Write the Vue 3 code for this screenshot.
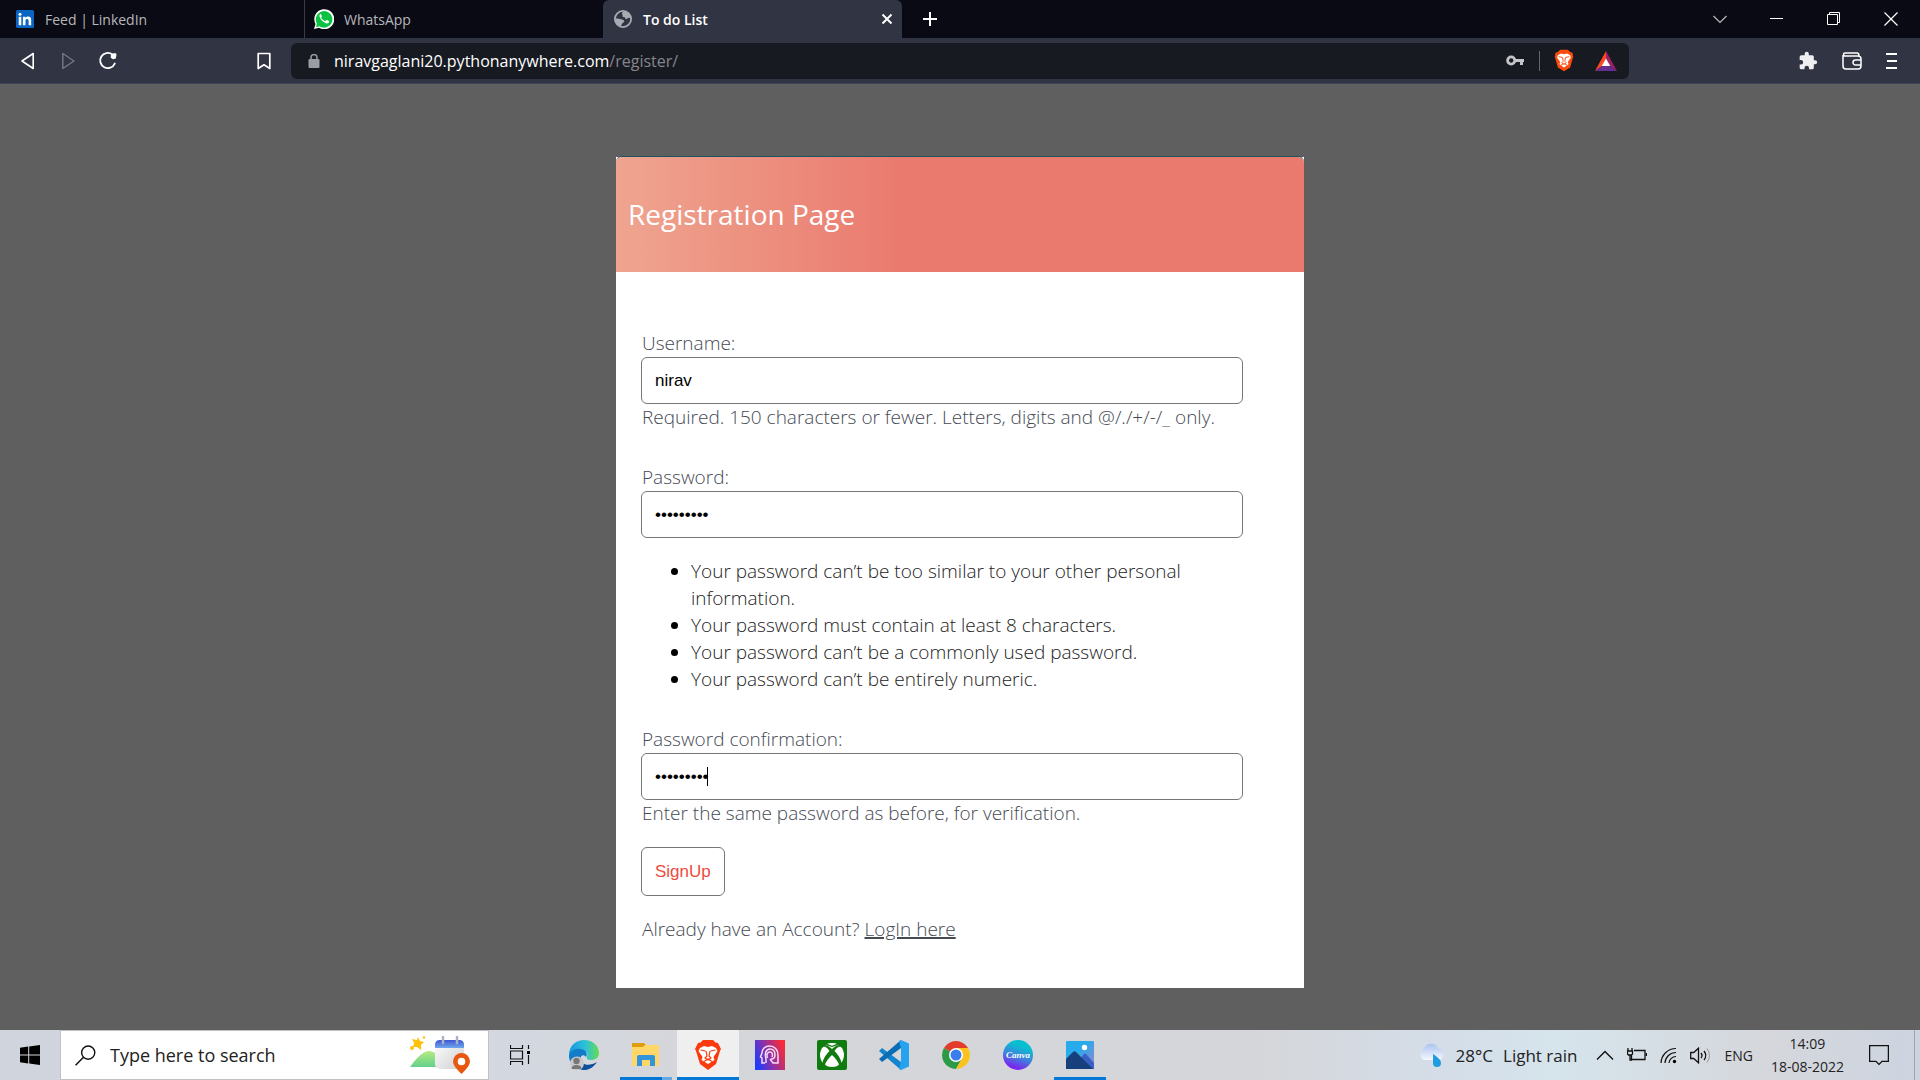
<script setup>
import { ref } from 'vue'

const username = ref('nirav')
const password = ref('nirav1234')
const confirmation = ref('nirav1234')
const search = ref('')
const rules = [
  'Your password can’t be too similar to your other personal information.',
  'Your password must contain at least 8 characters.',
  'Your password can’t be a commonly used password.',
  'Your password can’t be entirely numeric.',
]
</script>

<template>
  <div class="desktop">
    <header class="browser">
      <div class="tabs">
        <div class="tab first">
          <svg class="fav" viewBox="0 0 18 18"><rect width="18" height="18" rx="1.5" fill="#0a66c2" /><path d="M2.7 6.8h2.6v8.4H2.7zM6.9 6.8h2.5V8c.5-.8 1.4-1.4 2.6-1.4 2.6 0 3.2 1.6 3.2 4v4.6h-2.6v-4.1c0-1.2-.2-2.2-1.5-2.2s-1.600.9-1.600 2.100v4.200H6.900z" fill="#fff" /><circle cx="4" cy="4.200" r="1.500" fill="#fff" /></svg>
          <span>Feed | LinkedIn</span>
        </div>
        <div class="tab second">
          <svg class="fav-lg" viewBox="0 0 20 20"><path d="M0 20l1.500-5A10 10 0 1 1 5 18.700z" fill="#fff" /><path d="M1.900 18.200l1-3.700A8.300 8.300 0 1 1 5.400 17.200z" fill="#0dc143" /><path d="M6.400 5c-.8.500-1.200 1.500-.9 2.600.9 3.300 3.700 6 7 6.800 1.200.2 2.300-.5 2.600-1.600.1-.5 0-.7-.4-.9l-1.800-.9c-.3-.1-.5 0-.7.2l-.8 1c-2-.8-3.400-2-4.300-3.800l.7-.9c.1-.2.1-.4 0-.6l-.8-1.700c-.1-.3-.3-.3-.6-.2z" fill="#fff" /></svg>
          <span>WhatsApp</span>
        </div>
        <div class="tab active">
          <svg class="fav" viewBox="0 0 18 18"><circle cx="9" cy="9" r="8.100" fill="none" stroke="#a9abb3" stroke-width="1.800" /><path d="M10 1.200C8 2.500 7.200 3.400 8.300 4.200c1 .8-.4 1.400.3 2.200.9 1 2.200.2 2.500 1.500.3 1.400 2 1.200 2.800.4.700-.7 1.600-.5 2.700 0C16.600 4.500 13.500 1.500 10 1.200zM1.200 8.700C3 8.400 5.400 8.600 7 9.300c1.400.6 3.500.6 3.300 2.100-.1 1.200-1.900 1-2 2.200-.1 1.300-1.300 1.400-1.700 2.700C3.300 15.200 1.300 12.300 1.200 8.700z" fill="#a9abb3" /></svg>
          <span>To do List</span>
          <button class="plain close-tab" aria-label="Close tab"><svg width="12" height="12" viewBox="0 0 12 12"><path d="M1.500 1.500l9 9m0-9l-9 9" stroke="#fff" stroke-width="2" /></svg></button>
        </div>
        <button class="plain new-tab" aria-label="New tab"><svg width="16" height="16" viewBox="0 0 16 16"><path d="M8 1v14M1 8h14" stroke="#fff" stroke-width="2" /></svg></button>
        <div class="window-buttons">
          <button class="plain" aria-label="Search tabs"><svg width="14" height="14" viewBox="0 0 14 14"><path d="M.5 4l6.500 6.500L13.500 4" fill="none" stroke="#bbb" stroke-width="1.200" /></svg></button>
          <button class="plain" aria-label="Minimise"><svg width="14" height="14" viewBox="0 0 14 14"><path d="M0 6.500h13" stroke="#fff" /></svg></button>
          <button class="plain" aria-label="Restore"><svg width="14" height="14" viewBox="0 0 14 14"><path d="M.5 2.500h10v10H.5zM2.500 2V.5h10v10H11" fill="none" stroke="#fff" /></svg></button>
          <button class="plain" aria-label="Close"><svg width="14" height="14" viewBox="0 0 14 14"><path d="M.5.500l13 13m0-13l-13 13" stroke="#fff" stroke-width="1.200" /></svg></button>
        </div>
      </div>

      <nav class="toolbar">
        <div class="nav-buttons">
          <button class="plain" aria-label="Back"><svg width="20" height="20" viewBox="0 0 20 20"><path d="M15.200 2.500v15L4 10z" fill="none" stroke="#fff" stroke-width="1.600" stroke-linejoin="round" /></svg></button>
          <button class="plain" aria-label="Forward"><svg width="20" height="20" viewBox="0 0 20 20"><path d="M4.800 2.500v15L16 10z" fill="none" stroke="#74757f" stroke-width="1.500" stroke-linejoin="round" /></svg></button>
          <button class="plain" aria-label="Reload"><svg width="20" height="20" viewBox="0 0 20 20"><path d="M14.300 3.400A7.600 7.600 0 1 0 16.800 12.500" fill="none" stroke="#fff" stroke-width="1.900" stroke-linecap="round" /><path d="M13 3l4-1 1.500 1-.6 4.500-2.900.8-2.300-1.600z" fill="#fff" /></svg></button>
          <button class="plain bookmark" aria-label="Bookmark"><svg width="20" height="20" viewBox="0 0 20 20"><path d="M4.200 2.500h11.600v15L10 13.800l-5.800 3.700z" fill="none" stroke="#fff" stroke-width="1.700" stroke-linejoin="round" /></svg></button>
        </div>
        <div class="address">
          <svg width="12" height="14" viewBox="0 0 12 14"><rect x=".5" y="5" width="11" height="9" rx="1" fill="#9b9ca5" /><path d="M3 5.500V3.500a3 3 0 0 1 6 0v2" fill="none" stroke="#9b9ca5" stroke-width="1.500" /></svg>
          <span class="url">niravgaglani20.pythonanywhere.com<i>/register/</i></span>
          <button class="plain" aria-label="Passwords"><svg width="18" height="11" viewBox="0 0 18 11"><circle cx="5.200" cy="5.500" r="3.600" fill="none" stroke="#c4c5c9" stroke-width="2.800" /><path d="M8 4h10v3h-1v3h-3V7H8z" fill="#c4c5c9" /></svg></button>
          <span class="divider"></span>
          <button class="plain" aria-label="Brave Shields"><svg width="20" height="23" viewBox="0 0 26 30"><path d="M8 1h10l3 3 3 1 1 5-4 14-8 5-8-5L1 10l1-5 3-1z" fill="#fb4b0e" /><path d="M5 8l4-2 4 1 4-1 4 2 1 3-4 6 1 3-6 4-6-4 1-3-4-6z" fill="#fff" /><path d="M6 10l5 1M20 10l-5 1M11 11l1 5-2 2 3 2 3-2-2-2 1-5M9 21l4-2 4 2" fill="none" stroke="#fb4b0e" stroke-width="1.200" /></svg></button>
          <button class="plain" aria-label="Rewards"><svg width="22" height="20" viewBox="0 0 22 20"><path d="M11 0L0 20l7-5 4-7z" fill="#ff4724" /><path d="M11 0l11 20-7-5-4-7z" fill="#9e1f63" /><path d="M0 20h22l-7-5H7z" fill="#662d91" /><path d="M11 7.500L15.300 15H6.700z" fill="#fff" /></svg></button>
        </div>
        <div class="extensions">
          <button class="plain" aria-label="Extensions"><svg width="20" height="20" viewBox="0 0 24 24"><path d="M20.500 11H19V7a2 2 0 0 0-2-2h-4V3.500a2.500 2.500 0 0 0-5 0V5H4a2 2 0 0 0-2 2v3.800h1.500a2.700 2.700 0 0 1 0 5.400H2V20a2 2 0 0 0 2 2h3.800v-1.500a2.700 2.700 0 0 1 5.400 0V22H17a2 2 0 0 0 2-2v-4h1.500a2.500 2.500 0 0 0 0-5z" fill="#efeff2" /></svg></button>
          <button class="plain" aria-label="Wallet"><svg width="20" height="18" viewBox="0 0 20 18"><g fill="none" stroke="#fff" stroke-width="1.500"><path d="M1 3v11a3 3 0 0 0 3 3h12a3 3 0 0 0 3-3V7a3 3 0 0 0-3-3H3a1.500 1.500 0 0 1 0-3h12q2 0 2 3M19 8h-5.500a2.500 2.500 0 0 0 0 5H19" /></g></svg></button>
          <button class="plain" aria-label="Menu"><svg width="12" height="18" viewBox="0 0 12 18"><path d="M0 2h11M1 9h10M0 16h11" stroke="#fff" stroke-width="1.800" /></svg></button>
        </div>
      </nav>
    </header>

    <main class="page">
      <section class="card">
        <div class="card-head"><h1>Registration Page</h1></div>
        <form class="card-body" @submit.prevent>
          <div class="field">
            <label for="username">Username:</label>
            <input id="username" v-model="username" type="text">
            <p>Required. 150 characters or fewer. Letters, digits and @/./+/-/_ only.</p>
          </div>
          <div class="field">
            <label for="password">Password:</label>
            <input id="password" v-model="password" type="password">
            <ul>
              <li v-for="rule in rules" :key="rule">{{ rule }}</li>
            </ul>
          </div>
          <div class="field">
            <label for="confirmation">Password confirmation:</label>
            <div class="caret-box">
              <input id="confirmation" v-model="confirmation" type="password">
              <span class="caret"></span>
            </div>
            <p>Enter the same password as before, for verification.</p>
          </div>
          <button class="signup" type="submit">SignUp</button>
          <p class="login">Already have an Account? <a href="#login">LogIn here</a></p>
        </form>
      </section>
    </main>

    <footer class="taskbar">
      <button class="plain start" aria-label="Start"><svg width="20" height="20" viewBox="0 0 20 20"><path d="M0 2.700L8.200 1.600v7.900H0zM9.200 1.400L20 0v9.500H9.200zM0 10.500h8.200v7.900L0 17.300zM9.200 10.500H20V20L9.200 18.600z" /></svg></button>
      <label class="search" for="search">
        <svg width="21" height="21" viewBox="0 0 21 21"><circle cx="13.200" cy="7.600" r="6.600" fill="none" stroke="#111" stroke-width="1.400" /><path d="M8.500 12.300L.6 20.300" stroke="#111" stroke-width="1.500" /></svg>
        <input id="search" v-model="search" type="text" placeholder="Type here to search">
        <svg width="60" height="38" viewBox="0 0 60 38">
          <defs>
            <linearGradient id="hill" x2="0" y2="1"><stop stop-color="#b5eb83" /><stop offset="1" stop-color="#65d08b" /></linearGradient>
            <linearGradient id="cal" x2="0" y2="1"><stop stop-color="#3c57d2" /><stop offset="1" stop-color="#72a7ee" /></linearGradient>
            <linearGradient id="sheet" x2="1" y2="1"><stop stop-color="#fff" /><stop offset="1" stop-color="#cfcfcf" /></linearGradient>
          </defs>
          <path d="M8 1l2 4 4 1-3 3 0 5-4-3-4 0 1-4-2-4 5 1z" fill="#ffc20a" /><circle cx="2" cy="12" r="2" fill="#ffc20a" /><circle cx="14" cy="1.500" r="1.200" fill="#ffc20a" />
          <path d="M0 31q14-20 23-15 8 2 14 15z" fill="url(#hill)" />
          <rect x="25" y="4" width="29" height="29" rx="5" fill="url(#sheet)" /><path d="M25 12V9q0-5 5-5h19q5 0 5 5v3z" fill="url(#cal)" />
          <path d="M33 1v6M47 1v6" stroke="#aab2c6" stroke-width="2.500" stroke-linecap="round" />
          <path d="M51.500 38Q43 30 43 25.500a8.500 8.500 0 0 1 17 0Q60 30 51.500 38z" fill="#e85610" /><circle cx="51.500" cy="25.500" r="3.800" fill="#fff" />
        </svg>
      </label>
      <div class="apps">
        <button class="plain app" aria-label="Task view"><svg width="20" height="20" viewBox="0 0 20 20"><path d="M.5 0v3.500h12V0M.500 20v-3.500h12V20M.500 6h12v8H.500z" fill="none" stroke="#111" stroke-width="1.200" /><path d="M18.500 0v4M18.500 10v9" stroke="#111" stroke-width="1.200" /><rect x="17" y="6" width="3" height="3" /></svg></button>
        <button class="plain app" aria-label="Edge">
          <svg width="30" height="30" viewBox="0 0 30 30">
            <defs><linearGradient id="edge"><stop stop-color="#1597df" /><stop offset=".55" stop-color="#2ec2d8" /><stop offset="1" stop-color="#64dc50" /></linearGradient></defs>
            <path d="M0 15C0 5 8 0 15 0c9 0 15 6 15 13 0 5-4 7-8 7-3 0-5-1-4-3 2-4-2-7-6-7C5 10 1 13 0 19z" fill="url(#edge)" />
            <path d="M0 16c1-5 6-8 11-7 6 0 8 5 6 8-3-4-7 0-5 5 1 4 4 7 7 8C8 32 0 24 0 16z" fill="#127cc9" />
            <path d="M12 18c-1 7 8 9 16 4-3 5-8 8-13 8-5-1-7-7-3-12z" fill="#0d4f9c" />
            <circle cx="8" cy="23.500" r="7" fill="#c9c9c9" /><circle cx="7.500" cy="21" r="3.200" fill="#777" /><path d="M2.500 29q0-4 5-4t5 4z" fill="#777" />
          </svg>
        </button>
        <button class="plain app running stacked" aria-label="File Explorer"><svg width="28" height="24" viewBox="0 0 28 24"><path d="M0 1q0-1 1-1h11l2 2-2 4H0z" fill="#df9d0c" /><path d="M0 4h11l2-2h14v21H0z" fill="#ffd668" /><path d="M5 23V14q0-2 2-2h14q2 0 2 2v9h-5v-6h-8v6z" fill="#3294db" /></svg></button>
        <button class="plain app running current" aria-label="Brave"><svg width="26" height="30" viewBox="0 0 26 30"><path d="M8 0h10l2.500 2.500L23 3l3 6-1 2-4 13-8 6-8-6L1 11 0 9l3-6 2.500-.5z" fill="#fb3b0e" /><path d="M5 8l4-2 4 1 4-1 4 2 1.500 3-4 6 1 3-6.500 4-6.500-4 1-3-4-6z" fill="#fff" /><path d="M5.500 10l5 1M20.500 10l-5 1M11 11l1 5-2 2 3 2 3-2-2-2 1-5M9 21.500l4-2.500 4 2.500" fill="none" stroke="#fb3b0e" stroke-width="1.200" /></svg></button>
        <button class="plain app" aria-label="Assistant"><svg width="30" height="30" viewBox="0 0 30 30"><defs><linearGradient id="head" x1="0" x2="1" y1=".7" y2=".3"><stop stop-color="#1f3bff" /><stop offset=".5" stop-color="#96309e" /><stop offset="1" stop-color="#fb2936" /></linearGradient></defs><rect width="30" height="30" fill="url(#head)" /><g fill="none" stroke="#f3dcf8" stroke-width="1.500"><path d="M10 23H7v-5l-1.500-1L7 13C7 9 10 6 14.500 6c5 0 8.500 3.500 8.500 9v8h-5l-3-4" /><path d="M11 23v-4c-2-5 0-10 4-10 3.500 0 5 3 5 6s-2 4-4 4M12.500 18c-1.500-3 0-6 2.500-6s3 3 2 5" /></g></svg></button>
        <button class="plain app" aria-label="Xbox"><svg width="30" height="30" viewBox="0 0 30 30"><rect width="30" height="30" rx="2" fill="#107c10" /><circle cx="15" cy="15" r="12" fill="#fff" /><path d="M6.500 5C10 5 13 7 15 9c2-2 5-4 8.500-4l1 2c-3-1-5 1-7 4 4 4 7 9 7 13l-2 2c-1-4-4-8-7.500-11-3.500 3-6.500 7-7.500 11l-2-2c0-4 3-9 7-13-2-3-4-5-7-4z" fill="#107c10" /><path d="M8 3.500h14v1.300L15 7 8 4.800z" fill="#107c10" /><path d="M10 3.800q5-1.500 10 0L15 5.800z" fill="#fff" /></svg></button>
        <button class="plain app" aria-label="Visual Studio Code"><svg width="30" height="30" viewBox="0 0 30 30"><path d="M0 11l3-3 19 14v8z" fill="#1384cf" /><path d="M0 19l3 3L22 8V0z" fill="#0a6db5" /><path d="M22 0l8 3.500v23L22 30l-2-1 2-7V8l-2-7z" fill="#26a3ef" /></svg></button>
        <button class="plain app" aria-label="Chrome"><svg width="28" height="28" viewBox="0 0 28 28"><path d="M14 14L1.900 7A14 14 0 0 1 26.100 7z" fill="#e33b2e" /><path d="M14 14L1.900 7A14 14 0 0 0 14 28l6-10.500z" fill="#2c9a47" /><path d="M14 7h12.100A14 14 0 0 1 14 28l6-10.500z" fill="#fcc31f" /><circle cx="14" cy="14" r="7" fill="#fff" /><circle cx="14" cy="14" r="5.500" fill="#3b7ded" /></svg></button>
        <button class="plain app" aria-label="Canva"><span class="canva">Canva</span></button>
        <button class="plain app running" aria-label="Photos"><svg width="28" height="28" viewBox="0 0 28 28"><defs><linearGradient id="sky" x2="1" y2="1"><stop offset=".4" stop-color="#28abea" /><stop offset="1" stop-color="#a07fd0" /></linearGradient></defs><rect width="28" height="28" rx="1" fill="url(#sky)" /><path d="M14 18l4-5q1-1 2 0l8 9v6H14z" fill="#3a5fc4" /><path d="M0 18l7-7q1.500-1.500 3 0l17 17H0z" fill="#173f7c" /><circle cx="18.500" cy="6.500" r="2.700" fill="#fff" /></svg></button>
      </div>
      <div class="tray">
        <div class="weather">
          <svg width="28" height="26" viewBox="0 0 28 26"><defs><linearGradient id="cloud" x2="0" y2="1"><stop stop-color="#a9c3f0" /><stop offset="1" stop-color="#f5f8fd" /></linearGradient></defs><path d="M6 18A6 6 0 0 1 6 7 7.500 7.500 0 0 1 20 6a6.200 6.200 0 0 1 1 12z" fill="url(#cloud)" /><path d="M15 12q8 5 8 9a4 4 0 0 1-8 0z" fill="#1f9be0" /></svg>
          <span>28°C</span><span>Light rain</span>
        </div>
        <svg width="18" height="10" viewBox="0 0 18 10"><path d="M1 9.500l8-8 8 8" fill="none" stroke="#111" stroke-width="1.400" /></svg>
        <svg width="20" height="14" viewBox="0 0 20 14"><path d="M7 2.500h11v9H4.500V7M19.500 5v3M1 0v3M5 0v3M.5 3h5v3l-1 1h-3l-1-1zM3 7v5h2" fill="none" stroke="#111" stroke-width="1.300" /></svg>
        <svg width="17" height="17" viewBox="0 0 17 17"><g fill="none" stroke="#111" stroke-width="1.200"><path d="M1 16A15 15 0 0 1 16 1.500M5 16A11 11 0 0 1 16 5.500M9 16a7 7 0 0 1 7-6.500" /></g><circle cx="14.500" cy="14.500" r="1.700" /></svg>
        <svg width="21" height="17" viewBox="0 0 21 17"><path d="M.7 5.500h3L8.500 1.200v14.600L3.700 11.500h-3z" fill="none" stroke="#111" stroke-width="1.300" /><path d="M11 6q2 2.500 0 5M14 4q3.500 4.500 0 9" fill="none" stroke="#111" stroke-width="1.300" /><path d="M17 1.500q5 7 0 14" fill="none" stroke="#999" /></svg>
        <span class="lang">ENG</span>
        <time class="clock"><span>14:09</span><span>18-08-2022</span></time>
        <svg class="notes" width="20" height="20" viewBox="0 0 20 20"><path d="M.6.600h18.800v15.800H13l-3 3-3-3H.6z" fill="none" stroke="#111" stroke-width="1.300" /></svg>
      </div>
      <button class="plain show-desktop" aria-label="Show desktop"></button>
    </footer>
  </div>
</template>

<style>
body { margin: 0; background: #5f5f5f; }
</style>

<style scoped>
* { box-sizing: border-box; }
svg { display: block; flex: none; }
.desktop { display: flex; flex-direction: column; min-height: 100vh; font-family: "Open Sans", "Noto Sans", sans-serif; }
.plain { display: flex; align-items: center; justify-content: center; padding: 0; border: 0; background: none; color: inherit; flex: none; }

.tabs { display: flex; height: 38px; background: #0a0a14; color: #b7b7ba; font-size: 14px; }
.tab { display: flex; align-items: center; flex: 0 1 299px; gap: 11px; padding-left: 11px; white-space: nowrap; }
.first { flex-basis: 304px; padding-left: 16px; }
.second { gap: 10px; padding-left: 9px; border-left: 1px solid #3b3b42; }
.active { border-radius: 6px 6px 0 0; background: #313443; color: #fff; font-weight: 600; }
.fav { width: 18px; height: 18px; }
.fav-lg { width: 20px; height: 20px; }
.close-tab { margin-left: auto; padding-right: 9px; }
.new-tab { width: 56px; }
.window-buttons { display: flex; margin-left: auto; padding-right: 1px; }
.window-buttons .plain { width: 57px; }
.toolbar { display: flex; align-items: center; height: 46px; background: #313443; border-bottom: 1px solid #3d4258; }
.nav-buttons { display: flex; flex: 0 0 291px; gap: 20px; padding: 0 17px 0 18px; }
.bookmark { margin-left: auto; }
.address { display: flex; align-items: center; flex: 1; height: 36px; padding: 0 12px 0 17px; border-radius: 6px; background: #171a21; }
.url { flex: 1; margin-left: 14px; color: #fff; font-size: 16px; }
.url i { color: #85868c; font-style: normal; }
.divider { width: 1px; height: 20px; margin: 0 14px 0 15px; background: #64666e; }
.address .plain + .plain { margin-left: 21px; }
.extensions { display: flex; align-items: center; justify-content: flex-end; flex: 0 0 291px; gap: 24px; padding-right: 22px; }

.page { flex: 1; padding: 73px 24px 41px; background: #5f5f5f; color: #454a54; font-size: 19px; font-weight: 300; line-height: 27px; }
.card { max-width: 688px; margin: 0 auto; background: #fff; }
.card-head { display: flex; align-items: center; height: 115px; padding: 0 12px 2px; border-radius: 6px 6px 0 0; background: linear-gradient(to right, #efa590, #ea796e 42%); box-shadow: 0 -1px 0 #1c5560; }
h1 { margin: 0; color: #fff; font-size: 28px; font-weight: 400; line-height: 40px; }
.card-body { padding: 58px 61px 45px 25px; }
.field { margin-bottom: 33px; }
.field:last-of-type { margin-bottom: 20px; }
label { display: block; }
.field label, .field p, .login { padding-left: 1px; }
p { margin: 0; }
.field input { display: block; width: 100%; height: 47px; padding: 0 13px; border: 1px solid #767676; border-radius: 6px; background: #fff; color: #000; font: 17px "Liberation Sans", Arial, sans-serif; }
ul { margin: 20px 0 0; padding-left: 50px; color: #222; }
li::marker { color: #000; font-weight: 400; }
.caret-box { position: relative; }
.caret { position: absolute; left: 66px; top: 14px; width: 1px; height: 19px; background: #000; }
.signup { display: block; height: 49px; margin-bottom: 20px; padding: 0 13px; border: 1px solid #767676; border-radius: 6px; background: #fff; color: #ee4b3d; font: 17px "Liberation Sans", Arial, sans-serif; }
.login a { color: #454a54; text-decoration-thickness: 2px; }

.taskbar { display: flex; height: 50px; background: linear-gradient(to right, #d0d5dd, #d3d8e1 25%, #d5d6d9 38%, #d5d6d9 65%, #d4dde8 75%, #d6e4ec 81%, #d5d7dc 92%, #cdd4e0); color: #222; font-size: 17px; }
.start { width: 60px; }
.search { display: flex; align-items: center; width: 429px; padding: 0 18px 0 14px; border: 1px solid #bfc1c5; background: #fff; }
.search input { flex: 1; min-width: 0; margin-left: 14px; padding: 0; border: 0; outline: 0; background: none; color: #222; font: 18px "Open Sans", "Noto Sans", sans-serif; }
.search input::placeholder { color: #222; opacity: 1; }
.apps { display: flex; }
.app { width: 62px; border-bottom: 3px solid transparent; padding-top: 3px; }
.app + .app:nth-child(2) { margin-left: 2px; }
.running { width: 52px; margin: 0 5px; border-color: #0078d7; }
.stacked { border-image: linear-gradient(to right, #0078d7 80%, #64a9e4 80%) 1; }
.current { width: 62px; margin: 0; background: #efeff0; }
.canva { display: grid; place-items: center; width: 30px; height: 30px; border-radius: 50%; background: linear-gradient(200deg, #08bfd0 25%, #3f82dc 55%, #7c23ef 85%); color: #fff; font: italic bold 9px "Liberation Serif", serif; }
.tray { display: flex; align-items: center; gap: 13px; margin-left: auto; padding-right: 25px; }
.weather { display: flex; align-items: center; gap: 10px; margin-right: 6px; }
.lang { font-size: 14px; }
.clock { display: flex; flex-direction: column; align-items: center; margin-left: 5px; font-size: 14px; line-height: 23px; }
.notes { margin-left: 12px; }
.show-desktop { width: 6px; border-left: 1px solid #9da3af; }
</style>
